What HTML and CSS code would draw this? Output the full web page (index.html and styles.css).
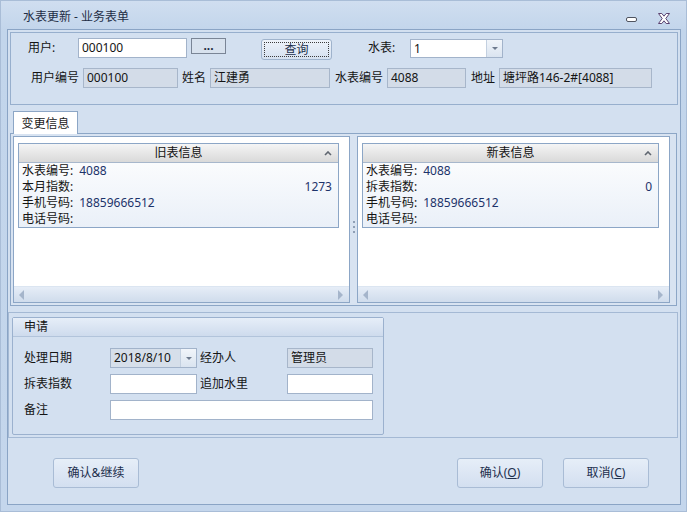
FILE: index.html
```html
<!DOCTYPE html>
<html lang="zh-CN">
<head>
<meta charset="utf-8">
<title>水表更新 - 业务表单</title>
<link rel="stylesheet" href="styles.css">
</head>
<body>
<div class="window">
  <div class="titlebar">
    <span class="title">水表更新 - 业务表单</span>
    <span class="btn-min"></span>
    <svg class="btn-close" width="12" height="11" viewBox="0 0 12 11"><path d="M0.5 0.5 H3.8 L6 3.2 L8.2 0.5 H11.5 L7.8 5.5 L11.5 10.5 H8.2 L6 7.8 L3.8 10.5 H0.5 L4.2 5.5 Z" fill="#fff" stroke="#5b4270" stroke-width="1" stroke-linejoin="round"/></svg>
  </div>
  <div class="frame">
    <div class="topgroup">
      <div class="row r1">
        <span class="lbl l-user">用户:</span>
        <span class="field f-user">000100</span>
        <span class="btn-dots">...</span>
        <span class="btn-query"><span class="focus">查询</span></span>
        <span class="lbl l-meter">水表:</span>
        <span class="combo c-meter"><span class="cval">1</span><span class="cdrop"><i class="tri"></i></span></span>
      </div>
      <div class="row r2">
        <span class="lbl l-code">用户编号</span><span class="ro ro-code">000100</span>
        <span class="lbl l-name">姓名</span><span class="ro ro-name">江建勇</span>
        <span class="lbl l-mcode">水表编号</span><span class="ro ro-mcode">4088</span>
        <span class="lbl l-addr">地址</span><span class="ro ro-addr">塘坪路146-2#[4088]</span>
      </div>
    </div>

    <div class="tabstrip"><div class="tab">变更信息</div></div>
    <div class="tabpage">
      <div class="panel p-left">
        <div class="pbody">
          <div class="dbox">
            <div class="dhead"><span></span><span class="dtitle">旧表信息</span><svg class="chev" width="8" height="5" viewBox="0 0 8 5"><path d="M1 4 L4 1 L7 4" fill="none" stroke="#5f6670" stroke-width="1.6"/></svg></div>
            <div class="drow"><span>水表编号:<span class="val">4088</span></span></div>
            <div class="drow"><span>本月指数:</span><span class="val">1273</span></div>
            <div class="drow"><span>手机号码:<span class="val">18859666512</span></span></div>
            <div class="drow"><span>电话号码:</span></div>
          </div>
        </div>
        <div class="hscroll"><i class="arr-l"></i><i class="arr-r"></i></div>
      </div>
      <div class="splitter"><i class="dots"></i></div>
      <div class="panel p-right">
        <div class="pbody">
          <div class="dbox">
            <div class="dhead"><span></span><span class="dtitle">新表信息</span><svg class="chev" width="8" height="5" viewBox="0 0 8 5"><path d="M1 4 L4 1 L7 4" fill="none" stroke="#5f6670" stroke-width="1.6"/></svg></div>
            <div class="drow"><span>水表编号:<span class="val">4088</span></span></div>
            <div class="drow"><span>拆表指数:</span><span class="val">0</span></div>
            <div class="drow"><span>手机号码:<span class="val">18859666512</span></span></div>
            <div class="drow"><span>电话号码:</span></div>
          </div>
        </div>
        <div class="hscroll"><i class="arr-l"></i><i class="arr-r"></i></div>
      </div>
    </div>

    <div class="applyarea">
      <div class="grp">
        <div class="grp-h">申请</div>
        <div class="grp-b">
          <div class="frow">
            <span class="flbl">处理日期</span>
            <span class="combo c-date"><span class="cval">2018/8/10</span><span class="cdrop"><i class="tri"></i></span></span>
            <span class="flbl2">经办人</span>
            <span class="ro ro-op">管理员</span>
          </div>
          <div class="frow">
            <span class="flbl">拆表指数</span>
            <span class="field f-a"></span>
            <span class="flbl2">追加水里</span>
            <span class="field f-b"></span>
          </div>
          <div class="frow">
            <span class="flbl">备注</span>
            <span class="field f-note"></span>
          </div>
        </div>
      </div>
    </div>

    <div class="btnrow">
      <span class="btn">确认&amp;继续</span>
      <span class="spacer"></span>
      <span class="btn">确认(<u>O</u>)</span>
      <span class="btn">取消(<u>C</u>)</span>
    </div>
  </div>
</div>
</body>
</html>
```
FILE: styles.css
```css
* { box-sizing: border-box; }
html, body { margin: 0; padding: 0; }
body {
  width: 687px;
  height: 512px;
  overflow: hidden;
  background: #c3d5eb;
  font-family: "Noto Sans", "Noto Sans CJK SC", sans-serif;
  font-size: 12px;
  color: #141414;
}
.window {
  width: 687px;
  height: 512px;
  border: 1px solid #a9bdd7;
  background: linear-gradient(#d0def0 0, #c2d5eb 30px, #c4d6ec 100%);
  display: flex;
  flex-direction: column;
}

/* title bar */
.titlebar {
  height: 28px;
  padding: 7px 16px 0 22px;
  display: flex;
  align-items: flex-start;
}
.title {
  flex: 1;
  font-size: 12px;
  line-height: 18px;
  color: #1f2e46;
}
.btn-min {
  width: 11px;
  height: 5px;
  margin-top: 9px;
  border: 1px solid #4f5460;
  border-radius: 2px;
  background: #fff;
}
.btn-close {
  margin-left: 21px;
  margin-top: 5px;
}

/* main frame */
.frame {
  margin-left: 6px;
  width: 674px;
  height: 476px;
  border: 1px solid #8aa4c5;
  background: #d3e0f0;
}

.topgroup {
  margin: 2px 0 0 2px;
  width: 668px;
  height: 73px;
  border: 1px solid #97afcd;
  padding-top: 5px;
}
.row { display: flex; align-items: flex-start; }
.r1 { height: 22px; padding-left: 17px; }
.r2 { height: 20px; margin-top: 8px; padding-left: 20px; }
.lbl { line-height: 20px; white-space: nowrap; }
.field {
  height: 20px;
  border: 1px solid #a2b3ca;
  background: #fff;
  padding: 0 3px;
  line-height: 18px;
}
.ro {
  height: 20px;
  border: 1px solid #a7b6ca;
  background: #d3dce8;
  padding: 0 3px;
  line-height: 18px;
  white-space: nowrap;
}
.l-user { width: 50px; }
.f-user { width: 109px; }
.btn-dots {
  margin-left: 4px;
  width: 35px;
  height: 16px;
  border: 1px solid #7a8596;
  background: #d8e2ee;
  text-align: center;
  line-height: 13px;
  font-weight: bold;
  color: #1c2a40;
}
.btn-query {
  margin-left: 35px;
  margin-top: 1px;
  width: 71px;
  height: 21px;
  border: 1px solid #9fb3cc;
  border-radius: 3px;
  background: linear-gradient(#eef3fa, #d5e1f0);
  padding: 2px;
  display: flex;
}
.btn-query .focus {
  flex: 1;
  border: 1px dotted #3b3b3b;
  text-align: center;
  line-height: 14px;
  color: #1c2f4c;
}
.l-meter { margin-left: 36px; width: 42px; }
.combo {
  height: 19px;
  border: 1px solid #a2b3ca;
  display: flex;
}
.c-meter { width: 93px; margin-top: 1px; background: #fff; }
.cval { flex: 1; padding: 0 3px; line-height: 17px; white-space: nowrap; }
.cdrop {
  width: 16px;
  border-left: 1px solid #c3d0e0;
  background: linear-gradient(#f1f5fa, #dae4f0);
  display: flex;
  align-items: center;
  justify-content: center;
}
.tri {
  width: 0;
  height: 0;
  border-left: 3px solid transparent;
  border-right: 3px solid transparent;
  border-top: 3px solid #6e7b8e;
}

.l-code { width: 52px; }
.ro-code { width: 95px; }
.l-name { margin-left: 4px; width: 28px; }
.ro-name { width: 120px; }
.l-mcode { margin-left: 5px; width: 52px; }
.ro-mcode { width: 79px; }
.l-addr { margin-left: 5px; width: 28px; }
.ro-addr { width: 153px; }

/* tabs */
.tabstrip { margin-top: 6px; padding-left: 5px; display: flex; }
.tab {
  position: relative;
  z-index: 1;
  width: 65px;
  height: 23px;
  margin-bottom: -1px;
  border: 1px solid #8ca6c6;
  border-bottom: none;
  background: #fff;
  text-align: center;
  line-height: 24px;
  color: #1a1a1a;
}
.tabpage {
  margin-left: 2px;
  width: 667px;
  height: 173px;
  border: 1px solid #8ca6c6;
  padding: 2px 6px 2px 2px;
  background: #d8e3f1;
  display: flex;
}
.panel {
  height: 100%;
  border: 1px solid #8ca6c6;
  background: #fff;
  display: flex;
  flex-direction: column;
}
.p-left { width: 337px; }
.p-right { width: 313px; }
.splitter {
  width: 7px;
  display: flex;
  align-items: center;
  justify-content: center;
}
.dots {
  width: 2px;
  height: 14px;
  margin-top: 16px;
  background: repeating-linear-gradient(#8f9fb5 0 2px, transparent 2px 5px);
}
.pbody { flex: 1; padding: 6px 10px 0 4px; }
.dbox {
  border: 1px solid #8ca6c6;
  background: linear-gradient(#ffffff, #eaf0f8);
}
.dhead {
  height: 19px;
  border-bottom: 1px solid #a7b7cc;
  background: linear-gradient(#f5f5f5, #d9d9d9);
  display: grid;
  grid-template-columns: 1fr auto 1fr;
  align-items: center;
  line-height: 18px;
  color: #111;
}
.dtitle { text-align: center; }
.chev { justify-self: end; margin-right: 6px; }
.drow {
  display: flex;
  justify-content: space-between;
  height: 16px;
  line-height: 16px;
  padding: 0 6px 0 3px;
  color: #141414;
  white-space: nowrap;
}
.drow .val { margin-left: 6px; }
.drow span + .val { margin-left: 0; }
.val { color: #1d336a; }
.hscroll {
  height: 16px;
  border-top: 1px solid #dbe5f1;
  background: linear-gradient(#e6edf7, #cfdcec);
  display: flex;
  justify-content: space-between;
  align-items: center;
  padding: 0 6px 0 5px;
}
.arr-l, .arr-r {
  width: 0;
  height: 0;
  border-top: 5px solid transparent;
  border-bottom: 5px solid transparent;
}
.arr-l { border-right: 5px solid #a5b5cb; }
.arr-r { border-left: 5px solid #a5b5cb; }

/* apply area */
.applyarea {
  margin-top: 6px;
  width: 670px;
  height: 126px;
  border: 1px solid #a4b9d4;
  padding: 4px 0 0 3px;
}
.grp {
  width: 372px;
  height: 118px;
  border: 1px solid #9bb1ce;
  border-radius: 2px;
}
.grp-h {
  height: 19px;
  border-bottom: 1px solid #b2c4db;
  background: linear-gradient(#e6eef8, #cedbed);
  padding-left: 11px;
  line-height: 18px;
}
.grp-b {
  padding: 11px 0 0 11px;
  display: flex;
  flex-direction: column;
  gap: 6px;
}
.frow { display: flex; height: 20px; }
.flbl { width: 86px; line-height: 20px; }
.flbl2 { margin-left: 3px; width: 87px; line-height: 20px; }
.c-date { width: 87px; height: 20px; background: #d6dfea; }
.c-date .cval { line-height: 18px; }
.ro-op { width: 86px; }
.f-a { width: 87px; }
.f-b { width: 86px; }
.f-note { width: 263px; }

/* buttons */
.btnrow {
  margin-top: 20px;
  display: flex;
  gap: 20px;
  padding: 0 31px 0 45px;
}
.spacer { flex: 1; }
.btn {
  width: 86px;
  height: 30px;
  border: 1px solid #a9bcd5;
  border-radius: 3px;
  background: linear-gradient(#e6eef8, #d3dff0);
  text-align: center;
  line-height: 28px;
  color: #1d2f4d;
}
```
